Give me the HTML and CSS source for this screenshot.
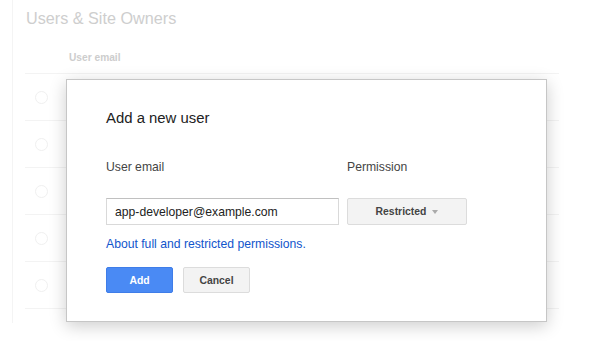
FILE: index.html
```html
<!DOCTYPE html>
<html>
<head>
<meta charset="utf-8">
<link rel="stylesheet" href="styles.css">
</head>
<body>
<div class="page">
  <h1 class="page-title">Users &amp; Site Owners</h1>
  <div class="table">
    <div class="thead"><span class="th">User email</span></div>
    <div class="row"><span class="radio"></span></div>
    <div class="row"><span class="radio"></span></div>
    <div class="row"><span class="radio"></span></div>
    <div class="row"><span class="radio"></span></div>
    <div class="row"><span class="radio"></span></div>
  </div>
</div>

<div class="dialog">
  <h2 class="dialog-title">Add a new user</h2>
  <div class="labels">
    <span class="label label-email">User email</span>
    <span class="label">Permission</span>
  </div>
  <div class="fields">
    <input class="input" type="text" value="app-developer@example.com">
    <button class="select">Restricted <span class="caret"></span></button>
  </div>
  <a class="link" href="#">About full and restricted permissions.</a>
  <div class="actions">
    <button class="btn btn-primary">Add</button>
    <button class="btn">Cancel</button>
  </div>
</div>
</body>
</html>
```

FILE: styles.css
```css
html, body {
  margin: 0;
  padding: 0;
  background: #fff;
  font-family: "Liberation Sans", Arial, sans-serif;
  width: 596px;
  height: 341px;
  overflow: hidden;
}

.page {
  margin-left: 12px;
  height: 323px;
  border-left: 1px solid #f4f4f4;
  padding-left: 12px;
  box-sizing: border-box;
}

.page-title {
  margin: 0;
  padding: 8px 0 0 1px;
  font-size: 16.2px;
  line-height: 21px;
  font-weight: normal;
  color: #cecece;
}

.table {
  margin-top: 22px;
  width: 534px;
}

.thead {
  height: 23px;
  border-bottom: 1px solid #f3f3f3;
  padding-left: 44px;
  box-sizing: border-box;
}

.th {
  font-size: 10.2px;
  font-weight: bold;
  color: #cdcdcd;
  line-height: 14px;
  display: block;
}

.row {
  height: 47px;
  border-bottom: 1px solid #f3f3f3;
  box-sizing: border-box;
  display: flex;
  align-items: center;
  padding-left: 10px;
}

.radio {
  width: 13px;
  height: 13px;
  border-radius: 50%;
  border: 1px solid #f0f0f0;
  box-sizing: border-box;
}

.dialog {
  position: absolute;
  left: 66px;
  top: 79px;
  width: 481px;
  height: 243px;
  box-sizing: border-box;
  background: #fff;
  border: 1px solid #c6c6c6;
  box-shadow: 0 4px 16px rgba(0, 0, 0, 0.2);
  padding: 28px 0 0 39px;
}

.dialog-title {
  margin: 0;
  font-size: 14.9px;
  line-height: 20px;
  font-weight: normal;
  color: #222;
}

.labels {
  margin-top: 31px;
  display: flex;
  font-size: 12.2px;
  line-height: 16px;
  color: #444;
}

.label-email {
  width: 241px;
}

.fields {
  margin-top: 23px;
  display: flex;
  gap: 8px;
}

.input {
  width: 233px;
  height: 27px;
  box-sizing: border-box;
  margin: 0;
  border: 1px solid #d9d9d9;
  border-top-color: #c0c0c0;
  padding: 0 8px;
  font-family: "Liberation Sans", Arial, sans-serif;
  font-size: 12.2px;
  color: #222;
  outline: none;
}

.select {
  width: 120px;
  height: 27px;
  box-sizing: border-box;
  margin: 0;
  border: 1px solid #dcdcdc;
  border-radius: 2px;
  background: #f3f3f3;
  font-family: "Liberation Sans", Arial, sans-serif;
  font-size: 10.4px;
  font-weight: bold;
  color: #444;
  display: flex;
  align-items: center;
  justify-content: center;
  gap: 6px;
  padding: 0;
}

.caret {
  width: 0;
  height: 0;
  border-left: 3px solid transparent;
  border-right: 3px solid transparent;
  border-top: 4px solid #aaa;
}

.link {
  display: block;
  margin-top: 11px;
  font-size: 12.2px;
  line-height: 16px;
  color: #15c;
  text-decoration: none;
}

.actions {
  margin-top: 15px;
  display: flex;
  gap: 10px;
}

.btn {
  width: 67px;
  height: 26px;
  box-sizing: border-box;
  margin: 0;
  border: 1px solid #dcdcdc;
  border-radius: 2px;
  background: #f3f3f3;
  font-family: "Liberation Sans", Arial, sans-serif;
  font-size: 10.4px;
  font-weight: bold;
  color: #444;
  padding: 0;
}

.btn-primary {
  background: #4a8af4;
  border-color: #3f7de8;
  color: #fff;
}
```
